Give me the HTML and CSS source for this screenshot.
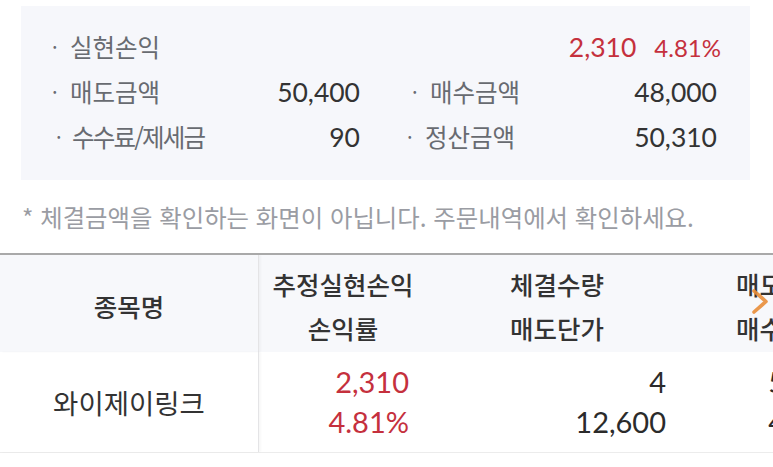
FILE: index.html
```html
<!DOCTYPE html>
<html lang="ko">
<head>
<meta charset="utf-8">
<link rel="stylesheet" href="styles.css">
</head>
<body>
<div class="page">
  <section class="summary">
    <div class="srow first">
      <span class="label"><i>·</i>실현손익</span>
      <span class="profit"><span class="red">2,310</span><span class="red rate">4.81%</span></span>
    </div>
    <div class="srow">
      <div class="half left"><span class="label"><i>·</i>매도금액</span><span class="val">50,400</span></div>
      <div class="half right"><span class="label"><i>·</i>매수금액</span><span class="val">48,000</span></div>
    </div>
    <div class="srow">
      <div class="half left"><span class="label l3"><i>·</i>수수료/제세금</span><span class="val">90</span></div>
      <div class="half right"><span class="label l4"><i>·</i>정산금액</span><span class="val">50,310</span></div>
    </div>
  </section>
  <p class="note">* 체결금액을 확인하는 화면이 아닙니다. 주문내역에서 확인하세요.</p>
  <div class="table-wrap">
    <div class="table">
      <div class="thead">
        <div class="cell c1"><span>종목명</span></div>
        <div class="cell c2"><span>추정실현손익</span><span>손익률</span></div>
        <div class="cell c3"><span>체결수량</span><span>매도단가</span></div>
        <div class="cell c4"><span>매도금액</span><span>매수금액</span></div>
      </div>
      <div class="tbody">
        <div class="cell c1 name">와이제이링크</div>
        <div class="cell c2 num red"><span>2,310</span><span>4.81%</span></div>
        <div class="cell c3 num"><span>4</span><span>12,600</span></div>
        <div class="cell c4 num"><span>50,400</span><span>48,000</span></div>
      </div>
    </div>
    <svg class="chev" width="20" height="28" viewBox="0 0 20 28"><polyline points="3,3 15,13.5 3,24" fill="none" stroke="#e98e3a" stroke-width="3.6" stroke-linecap="round" stroke-linejoin="round"/></svg>
  </div>
</div>
</body>
</html>
```
FILE: styles.css
```css
html, body {
  margin: 0;
  padding: 0;
  background: #ffffff;
}
body {
  font-family: Lato, "Noto Sans CJK KR", sans-serif;
  width: 773px;
  height: 467px;
  overflow: hidden;
}
.page {
  padding-top: 6px;
}
.summary {
  margin-left: 21px;
  width: 729px;
  box-sizing: border-box;
  background: #f6f7fb;
  padding: 18px 33px 21px 31px;
}
.srow {
  display: flex;
  height: 45px;
  align-items: center;
}
.srow.first {
  justify-content: space-between;
  margin-right: -4px;
}
.label {
  color: #686b71;
  font-family: "Noto Sans CJK KR", sans-serif;
  font-size: 24.5px;
  line-height: 45px;
  display: flex;
  align-items: center;
}
.label i {
  font-style: normal;
  width: 18px;
  font-size: 20px;
}
.half {
  display: flex;
  justify-content: space-between;
  align-items: center;
}
.half.left {
  width: 308px;
}
.half.right {
  width: 305px;
  margin-left: 52px;
}
.l3 {
  margin-left: 4px;
  letter-spacing: -1.8px;
}
.l3 i {
  letter-spacing: 0;
  width: 16px;
}
.l4 { margin-left: -5px; }
.val, .profit {
  font-size: 26.5px;
  color: #333;
}
.red {
  color: #c5303d;
}
.rate {
  font-size: 24px;
  margin-left: 18px;
}
.note {
  margin: 17px 0 0 22px;
  height: 40px;
  line-height: 40px;
  font-family: "Noto Sans CJK KR", sans-serif;
  font-size: 24.4px;
  color: #9a9ca3;
  white-space: nowrap;
}
.table-wrap {
  position: relative;
  margin-top: 16px;
  width: 773px;
  overflow: hidden;
  border-top: 2px solid #a9a9a9;
}
.table {
  width: 900px;
}
.thead, .tbody {
  display: flex;
}
.thead {
  height: 97px;
  background: #f7f8fb;
}
.tbody {
  height: 100px;
  border-bottom: 1px solid #ececec;
}
.cell {
  display: flex;
  flex-direction: column;
  justify-content: center;
  box-sizing: border-box;
}
.thead .cell {
  align-items: center;
  font-family: "Noto Sans CJK KR", sans-serif;
  font-size: 25.5px;
  font-weight: 500;
  color: #333;
  line-height: 44px;
  padding-top: 4px;
}
.c1 {
  width: 259px;
  border-right: 1px solid #e4e4e6;
  box-shadow: 2px 0 2px rgba(0,0,0,0.03);
}
.c2 { width: 168px; }
.c3 { width: 260px; }
.c4 { width: 192px; }
.name {
  align-items: center;
  font-family: "Noto Sans CJK KR", sans-serif;
  font-size: 27.5px;
  color: #333;
}
.num {
  align-items: flex-end;
  font-size: 29px;
  line-height: 40px;
  color: #2b2b2b;
}
.tbody .c2 { padding-right: 18px; }
.tbody .c3 { padding-right: 21px; }
.tbody .c4 { padding-right: 20px; }
.num.red { color: #c5303d; }
.chev {
  position: absolute;
  left: 751px;
  top: 33px;
  opacity: 0.9;
}
```
